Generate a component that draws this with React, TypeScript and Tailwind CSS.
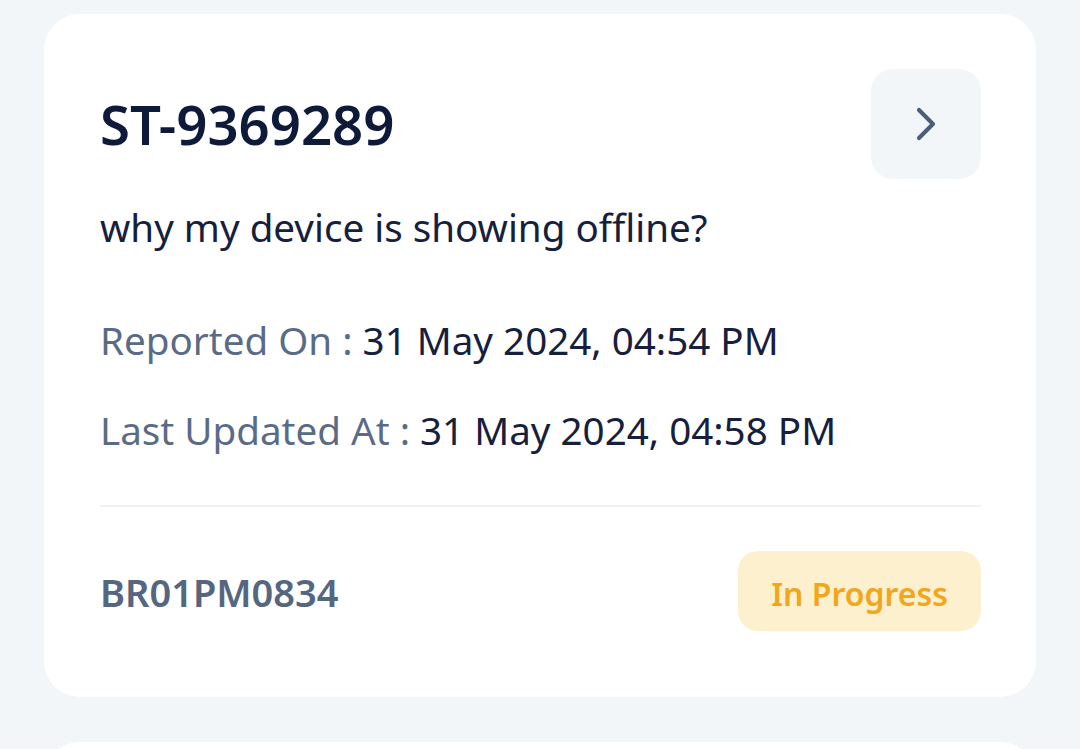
import { ChevronRight } from "lucide-react";

export default function App() {
  return (
    <div
      className="min-h-[749px] w-[1080px] bg-[#f3f6f9] px-[44px] pt-[14px] overflow-hidden"
      style={{ fontFamily: '"Noto Sans", "Open Sans", sans-serif' }}
    >
      <div className="rounded-[36px] bg-white pl-[56px] pr-[55px] pt-[55px] pb-[66px]">
        <div className="flex items-center justify-between">
          <h1 className="text-[54.5px] font-semibold leading-none text-[#0d1a3a]">
            ST-9369289
          </h1>
          <button
            type="button"
            className="flex h-[110px] w-[110px] items-center justify-center rounded-[22px] bg-[#f3f6f9] text-[#4a5d7b]"
          >
            <ChevronRight size={56} strokeWidth={1.8} />
          </button>
        </div>

        <p className="mt-[29px] text-[38.6px] leading-none text-[#16203d]">
          why my device is showing offline?
        </p>

        <div className="mt-[74px] flex flex-col gap-[52px] text-[38.6px] leading-none">
          <p>
            <span className="text-[#5a6b86]">Reported On : </span>
            <span className="text-[#16203d]">31 May 2024, 04:54 PM</span>
          </p>
          <p>
            <span className="text-[#5a6b86]">Last Updated At : </span>
            <span className="text-[#16203d]">31 May 2024, 04:58 PM</span>
          </p>
        </div>

        <div className="mt-[55px] h-[2px] bg-[#eef1f5]" />

        <div className="mt-[44px] flex items-center justify-between">
          <span className="pt-[4px] text-[38px] font-semibold text-[#56667f]">BR01PM0834</span>
          <span className="flex h-[80px] items-center rounded-[20px] bg-[#fdf0cf] px-[33px] pt-[6px] text-[32px] font-semibold text-[#f2a619]">
            In Progress
          </span>
        </div>
      </div>

      <div className="mt-[45px] h-[100px] rounded-[36px] bg-white" />
    </div>
  );
}
